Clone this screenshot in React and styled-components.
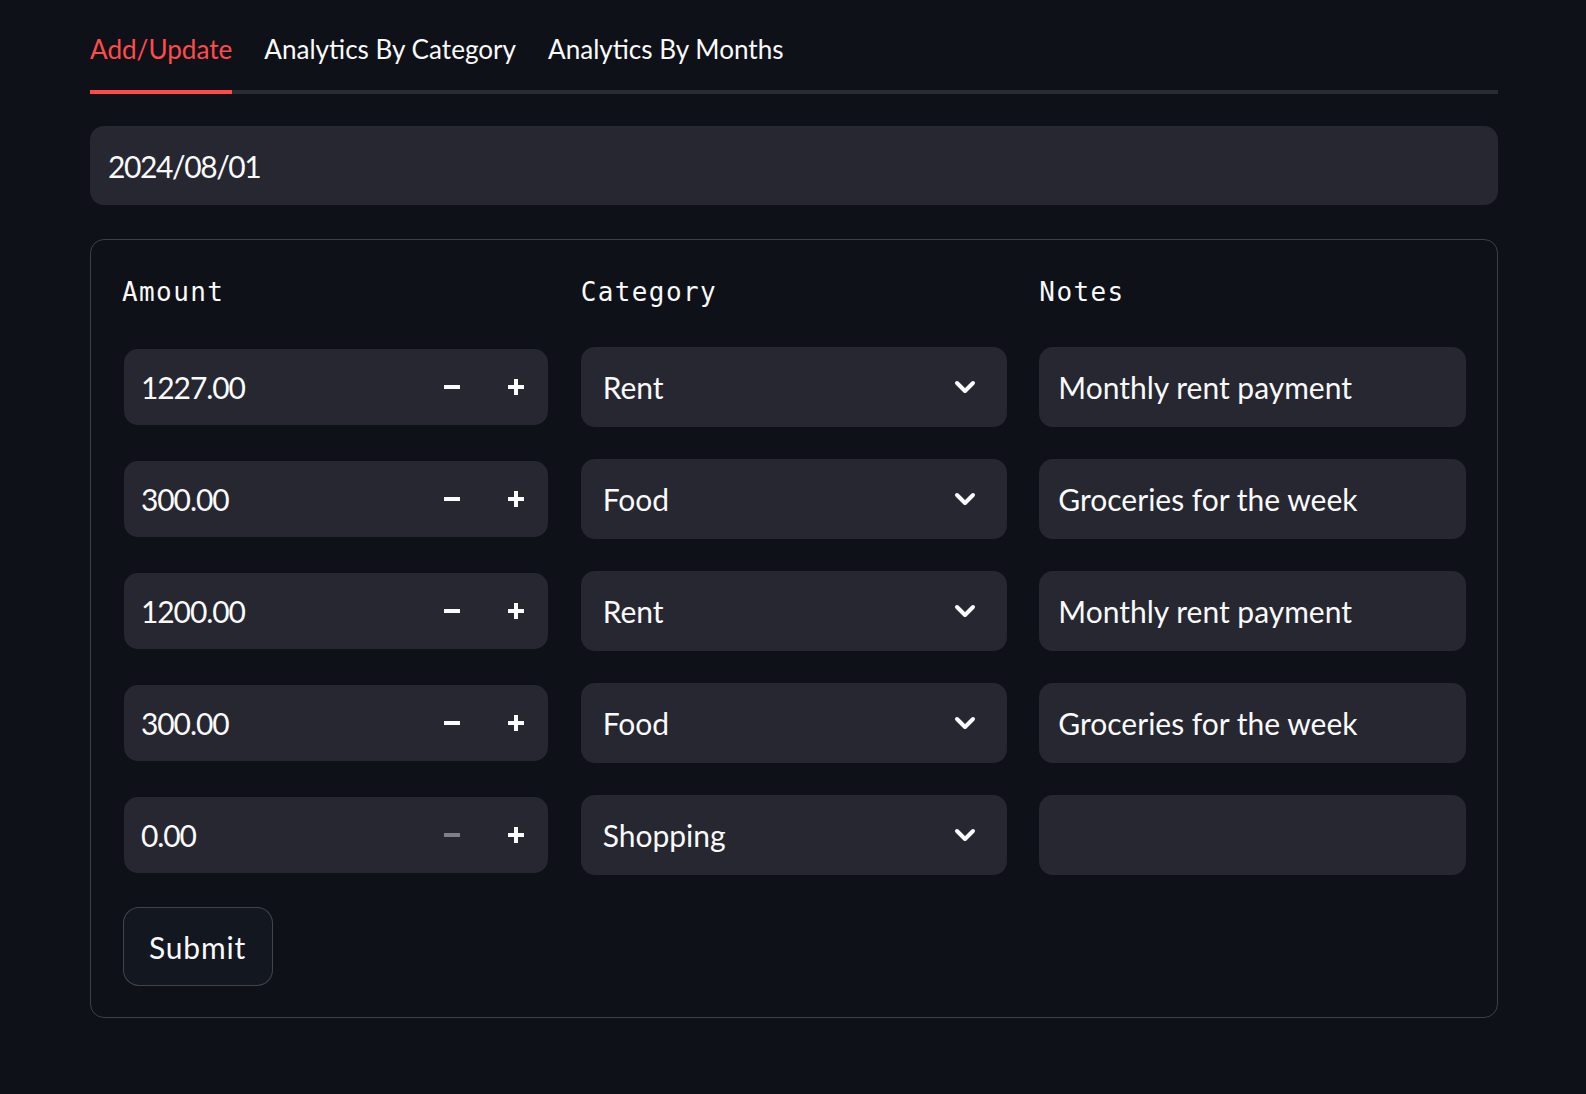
import React from "react";
import styled, { createGlobalStyle } from "styled-components";

const Global = createGlobalStyle`
  html, body { margin: 0; padding: 0; background: #0e1117; }
  body { font-family: "Lato", "Liberation Sans", sans-serif; color: #fafafa; }
  * { box-sizing: border-box; }
`;

const Page = styled.div`
  width: 1408px;
  margin: 0 0 0 90px;
  padding-top: 16px;
  padding-bottom: 60px;
`;

const TabList = styled.div`
  display: flex;
  gap: 32px;
  border-bottom: 4px solid #2a2c33;
`;

const Tab = styled.div`
  height: 78px;
  padding-bottom: 8px;
  margin-bottom: -4px;
  display: flex;
  align-items: center;
  font-size: 26.1px;
  color: ${(p) => (p.$active ? "#ff4b4b" : "#fafafa")};
  border-bottom: 4px solid ${(p) => (p.$active ? "#ff4b4b" : "transparent")};
  white-space: nowrap;
`;

const DateField = styled.div`
  margin-top: 32px;
  height: 79px;
  border-radius: 14px;
  background: #262730;
  display: flex;
  align-items: center;
  padding-left: 18px;
  font-size: 30px;
  letter-spacing: -1.4px;
`;

const Form = styled.div`
  margin-top: 34px;
  border: 1px solid rgba(250, 250, 250, 0.2);
  border-radius: 14px;
  padding: 32px 31px 31px;
`;

const Grid = styled.div`
  display: grid;
  grid-template-columns: repeat(3, 1fr);
  grid-template-rows: 43px repeat(5, 80px);
  column-gap: 32px;
  row-gap: 32px;
`;

const Label = styled.div`
  font-family: "DejaVu Sans Mono", "Liberation Mono", monospace;
  font-size: 26px;
  letter-spacing: 1.4px;
  line-height: 40px;
  color: #fafafa;
`;

const Field = styled.div`
  height: ${(p) => p.$h || 80}px;
  align-self: center;
  margin: ${(p) => (p.$inset ? "0 1px 0 2px" : "0")};
  border-radius: 14px;
  background: #262730;
  display: flex;
  align-items: center;
  padding-left: ${(p) => p.$pad || 19}px;
  font-size: 30px;
  color: #fafafa;
`;

const Value = styled.span`
  flex: 1;
  white-space: nowrap;
  letter-spacing: ${(p) => (p.$numeric ? "-1.1px" : "normal")};
`;

const StepButton = styled.div`
  width: 64px;
  height: 100%;
  display: flex;
  align-items: center;
  justify-content: center;
  color: ${(p) => (p.$disabled ? "#7d7f8c" : "#fafafa")};
`;

const Chevron = styled.div`
  width: 84px;
  display: flex;
  align-items: center;
  justify-content: center;
`;

const SubmitButton = styled.button`
  margin-top: 32px;
  margin-left: 1px;
  height: 79px;
  padding: 0 26px 0 25px;
  border-radius: 16px;
  border: 1px solid rgba(250, 250, 250, 0.2);
  background: #131720;
  color: #fafafa;
  font-family: "Lato", "Liberation Sans", sans-serif;
  font-size: 30px;
  letter-spacing: 0.8px;
  cursor: pointer;
`;

const Minus = () => (
  <svg width="16" height="4" viewBox="0 0 16 4">
    <rect x="0" y="0" width="16" height="4" fill="currentColor" />
  </svg>
);

const Plus = () => (
  <svg width="16" height="16" viewBox="0 0 16 16">
    <rect x="0" y="6" width="16" height="4" fill="currentColor" />
    <rect x="6" y="0" width="4" height="16" fill="currentColor" />
  </svg>
);

const ChevronDown = () => (
  <svg width="22" height="14" viewBox="0 0 22 14">
    <polyline
      points="3,3 11,11 19,3"
      fill="none"
      stroke="#fafafa"
      strokeWidth="4"
      strokeLinecap="round"
      strokeLinejoin="round"
    />
  </svg>
);

const rows = [
  { amount: "1227.00", category: "Rent", notes: "Monthly rent payment" },
  { amount: "300.00", category: "Food", notes: "Groceries for the week" },
  { amount: "1200.00", category: "Rent", notes: "Monthly rent payment" },
  { amount: "300.00", category: "Food", notes: "Groceries for the week" },
  { amount: "0.00", category: "Shopping", notes: "" },
];

export default function App() {
  return (
    <>
      <Global />
      <Page>
        <TabList>
          <Tab $active>Add/Update</Tab>
          <Tab>Analytics By Category</Tab>
          <Tab>Analytics By Months</Tab>
        </TabList>
        <DateField>2024/08/01</DateField>
        <Form>
          <Grid>
            <Label>Amount</Label>
            <Label>Category</Label>
            <Label>Notes</Label>
            {rows.map((r, i) => (
              <React.Fragment key={i}>
                <Field $h={76} $inset $pad={17}>
                  <Value $numeric>{r.amount}</Value>
                  <StepButton $disabled={r.amount === "0.00"}>
                    <Minus />
                  </StepButton>
                  <StepButton>
                    <Plus />
                  </StepButton>
                </Field>
                <Field $pad={22}>
                  <Value>{r.category}</Value>
                  <Chevron>
                    <ChevronDown />
                  </Chevron>
                </Field>
                <Field $pad={19}>
                  <Value>{r.notes}</Value>
                </Field>
              </React.Fragment>
            ))}
          </Grid>
          <SubmitButton>Submit</SubmitButton>
        </Form>
      </Page>
    </>
  );
}
